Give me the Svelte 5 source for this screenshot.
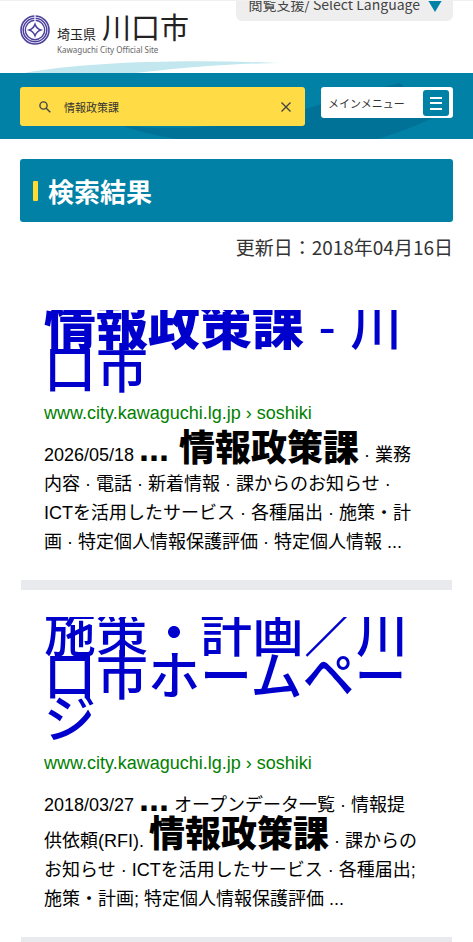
<script>
  let query = $state("情報政策課");

  const results = [
    {
      title: [{ text: "情報政策課", strong: true }, { text: " - 川口市" }],
      url: "www.city.kawaguchi.lg.jp › soshiki",
      snippet: [
        { text: "2026/05/18 " },
        { text: "... 情報政策課", strong: true },
        {
          text: " · 業務内容 · 電話 · 新着情報 · 課からのお知らせ · ICTを活用したサービス · 各種届出 · 施策・計画 · 特定個人情報保護評価 · 特定個人情報 ..."
        }
      ]
    },
    {
      title: [{ text: "施策・計画／川口市ホームページ" }],
      url: "www.city.kawaguchi.lg.jp › soshiki",
      snippet: [
        { text: "2018/03/27 " },
        { text: "...", strong: true },
        { text: " オープンデータ一覧 · 情報提供依頼(RFI). " },
        { text: "情報政策課", strong: true },
        {
          text: " · 課からのお知らせ · ICTを活用したサービス · 各種届出; 施策・計画; 特定個人情報保護評価 ..."
        }
      ]
    }
  ];
</script>

<header>
  <div class="top">
    <a class="logo" href="/">
      <svg class="emblem" viewBox="0 0 30 30" aria-hidden="true">
        <g fill="none" stroke="#4c419c">
          <circle cx="15" cy="15" r="14" stroke-width="1.6" />
          <circle cx="15" cy="15" r="11.8" stroke-width="1.5" />
          <circle cx="15" cy="15" r="9.7" stroke-width="1.4" />
          <path
            d="M15 9.2Q16.5 13.5 20.8 15Q16.5 16.5 15 20.8Q13.5 16.5 9.2 15Q13.5 13.5 15 9.2Z"
            stroke-width="1.5" />
        </g>
        <path d="M15 0V7" stroke="#fff" stroke-width="1.2" />
      </svg>
      <span class="names">
        <span class="ja"><span class="pref">埼玉県</span><span class="city">川口市</span></span>
        <span class="en">Kawaguchi City Official Site</span>
      </span>
    </a>
    <button class="language" type="button">
      閲覧支援/ Select Language
      <svg viewBox="0 0 18 15" aria-hidden="true"><path d="M0 0H18L9 15Z" fill="#0081a5" /></svg>
    </button>
    <svg class="wave" viewBox="0 0 256 12" aria-hidden="true">
      <path d="M0 12C60 1 160-2 256 2C190 3 150 8 112 12Z" fill="#c2e7ee" />
    </svg>
  </div>
  <div class="bar">
    <svg class="swoosh" viewBox="0 0 473 66" preserveAspectRatio="none" aria-hidden="true">
      <path d="M120 52C185 60 260 50 305 36Q350 22 400 10L435 44Q410 56 378 66H176Q145 61 120 52Z" fill="#007297" />
    </svg>
    <form class="search" role="search">
      <button type="submit" aria-label="検索">
        <svg viewBox="0 0 12 12"><circle cx="4.5" cy="4.5" r="3.6" /><path d="M7.2 7.2L11.3 11.3" /></svg>
      </button>
      <input type="text" aria-label="サイト内検索" bind:value={query} />
      <button type="button" aria-label="クリア" onclick={() => (query = "")}>
        <svg viewBox="0 0 12 12"><path d="M1.5 1.5L10.5 10.5M10.5 1.5L1.5 10.5" /></svg>
      </button>
    </form>
    <button class="menu" type="button">
      メインメニュー
      <svg viewBox="0 0 26 26" aria-hidden="true">
        <rect width="26" height="26" rx="3" fill="#0081a5" />
        <path d="M7 8H19M7 13H19M7 19H19" stroke="#fff" stroke-width="2" />
      </svg>
    </button>
  </div>
</header>

<main>
  <h1>検索結果</h1>
  <p class="updated">更新日：2018年04月16日</p>

  <div class="results">
    {#each results as result}
      <article>
        <h2>
          <a href="https://www.city.kawaguchi.lg.jp/soshiki/">{#each result.title as part}{#if part.strong}<b>{part.text}</b>{:else}{part.text}{/if}{/each}</a>
        </h2>
        <div class="url">{result.url}</div>
        <p class="snippet">{#each result.snippet as part}{#if part.strong}<b>{part.text}</b>{:else}{part.text}{/if}{/each}</p>
      </article>
    {/each}
  </div>
</main>

<style>
  :global(body) {
    margin: 0;
    background: #fff;
    color: #333;
    font-family: "Noto Sans CJK JP", sans-serif;
  }

  button,
  input {
    border: 0;
    padding: 0;
    background: none;
    color: inherit;
    font-family: inherit;
  }

  button {
    cursor: pointer;
  }

  .top {
    position: relative;
    display: flex;
    justify-content: space-between;
    align-items: flex-start;
    height: 73px;
    padding: 0 20px;
    box-sizing: border-box;
    border-top: 1px solid #f0f0f0;
    overflow: hidden;
  }

  .logo {
    display: flex;
    gap: 7px;
    padding-top: 14px;
    color: #222;
    text-decoration: none;
  }

  .emblem {
    width: 30px;
    height: 30px;
  }

  .names {
    display: flex;
    flex-direction: column;
  }

  .ja {
    display: flex;
    align-items: baseline;
    gap: 6px;
    line-height: 22px;
    white-space: nowrap;
  }

  .pref {
    font-size: 13px;
  }

  .city {
    font-size: 29px;
  }

  .en {
    color: #666;
    font-family: "Noto Sans", sans-serif;
    font-size: 8px;
    line-height: 10px;
  }

  .language {
    display: flex;
    align-items: center;
    gap: 6px;
    height: 34px;
    margin-top: -14px;
    padding: 0 9px 0 12px;
    border-radius: 6px;
    background: #eee;
    color: #444;
    font-size: 14px;
    white-space: nowrap;
  }

  .language svg {
    width: 18px;
    height: 15px;
  }

  .wave {
    position: absolute;
    left: 24px;
    bottom: 0;
    width: 256px;
    height: 12px;
  }

  .bar {
    position: relative;
    display: flex;
    align-items: flex-start;
    gap: 16px;
    padding: 14px 20px 13px;
    background: #0081a5;
  }

  .swoosh {
    position: absolute;
    top: 0;
    left: 0;
    width: 100%;
    height: 100%;
  }

  .search {
    position: relative;
    flex: 1;
    display: flex;
    align-items: center;
    min-width: 0;
    height: 39px;
    padding: 0 13px 0 19px;
    border-radius: 3px;
    background: #ffdc45;
  }

  .search button {
    display: flex;
  }

  .search svg {
    width: 12px;
    height: 12px;
    fill: none;
    stroke: #444;
    stroke-width: 1.4;
  }

  .search input {
    flex: 1;
    min-width: 0;
    margin-left: 13px;
    font-size: 11px;
    outline: none;
  }

  .menu {
    position: relative;
    display: flex;
    justify-content: space-between;
    align-items: center;
    width: 132px;
    height: 31px;
    padding: 0 4px 0 7px;
    border-radius: 3px;
    background: #fff;
    font-size: 11px;
    white-space: nowrap;
  }

  .menu svg {
    width: 26px;
    height: 26px;
  }

  main {
    padding: 20px 20px 0;
  }

  h1 {
    display: flex;
    align-items: center;
    gap: 10px;
    height: 63px;
    margin: 0;
    padding: 0 13px;
    border-radius: 3px;
    background: #0081a5;
    color: #fff;
    font-size: 26px;
    font-weight: 700;
  }

  h1::before {
    content: "";
    width: 5px;
    height: 20px;
    border-radius: 1px;
    background: #ffdc30;
  }

  .updated {
    margin: 10px 0 49px;
    font-size: 19px;
    line-height: 29px;
    text-align: right;
  }

  .results {
    margin: 0 1px;
    color: #000;
    font-family: "Liberation Sans", "Noto Sans CJK JP", sans-serif;
    font-size: 18px;
    line-height: 29px;
  }

  article {
    padding: 0 32px 23px 23px;
    border-bottom: 10px solid #e8eaed;
  }

  article + article {
    padding-top: 27px;
  }

  h2 {
    margin: 0;
    overflow: hidden;
    font-size: 52px;
    font-weight: 500;
    line-height: 43px;
  }

  h2 a {
    display: block;
    margin-top: -4px;
    padding-bottom: 4px;
    color: #0000cc;
    text-decoration: none;
  }

  b {
    font-weight: 900;
  }

  .url {
    margin-top: 3px;
    color: #008000;
  }

  .snippet {
    margin: 6px 0 0;
  }

  .snippet b {
    font-size: 36px;
  }
</style>
